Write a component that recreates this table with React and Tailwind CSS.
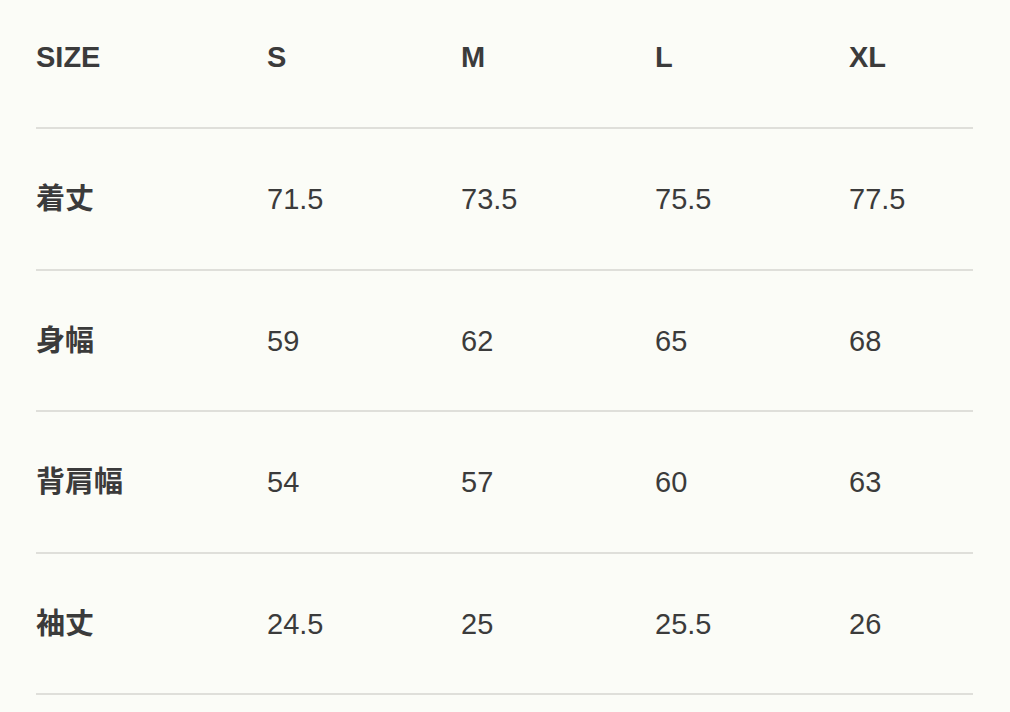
const sizes = ['S', 'M', 'L', 'XL'];

const rows = [
    { label: '着丈', values: ['71.5', '73.5', '75.5', '77.5'] },
    { label: '身幅', values: ['59', '62', '65', '68'] },
    { label: '背肩幅', values: ['54', '57', '60', '63'] },
    { label: '袖丈', values: ['24.5', '25', '25.5', '26'] },
];

const cols = 'grid grid-cols-[231px_194px_194px_194px_1fr]';

export default function App() {
    return (
        <div
            className="min-h-[712px] w-full bg-[#fbfcf7] text-[#3b3b3b] overflow-hidden"
            style={{ fontFamily: '"Liberation Sans", "Noto Sans CJK JP", sans-serif' }}
        >
            <div className="mx-[36px] w-[937px]">
                {/* Header */}
                <div className={`${cols} h-[129px] items-center pb-[12px] border-b-2 border-[#dfdfda] text-[29px] font-bold leading-none`}>
                    <div>SIZE</div>
                    {sizes.map((s) => (
                        <div key={s}>{s}</div>
                    ))}
                </div>

                {/* Body */}
                {rows.map((row) => (
                    <div
                        key={row.label}
                        className={`${cols} h-[141.5px] items-center pt-[2px] border-b-2 border-[#dfdfda] text-[29px] leading-none`}
                    >
                        <div className="font-bold">{row.label}</div>
                        {row.values.map((v, i) => (
                            <div key={i}>{v}</div>
                        ))}
                    </div>
                ))}
            </div>
        </div>
    );
}
